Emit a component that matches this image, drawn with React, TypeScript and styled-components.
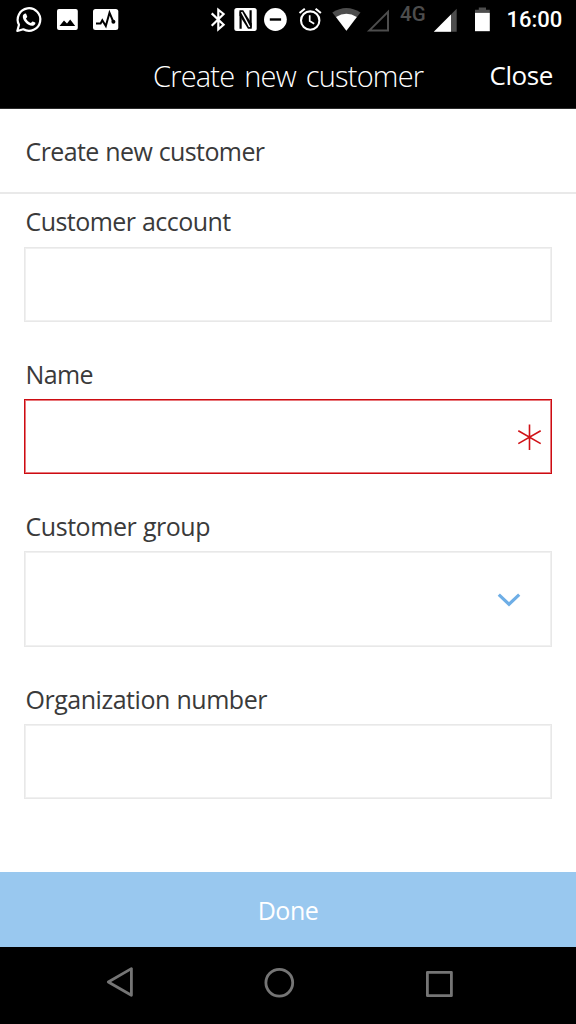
import React from "react";
import styled, { createGlobalStyle } from "styled-components";

const GlobalStyle = createGlobalStyle`
  * { box-sizing: border-box; }
  body { margin: 0; background: #fff; }
`;

const Screen = styled.div`
  display: flex;
  flex-direction: column;
  width: 576px;
  height: 1024px;
  overflow: hidden;
  background: #fff;
  color: #3a3a3a;
  font-family: "Open Sans", "Noto Sans", sans-serif;
`;

const StatusBar = styled.div`
  display: flex;
  align-items: flex-start;
  height: 40px;
  background: #000;
  color: #fff;
`;

const StatusIcon = styled.svg<{ $gap: number }>`
  flex: none;
  display: block;
  height: 40px;
  margin-left: ${(p) => p.$gap}px;
`;

const Network = styled.span`
  width: 28px;
  margin-left: 9px;
  color: #4d4d4d;
  font: 500 20.5px/28px Roboto, sans-serif;
`;

const Clock = styled.span`
  margin-left: 15.5px;
  font: 500 22px/40px Roboto, sans-serif;
  white-space: nowrap;
`;

const TitleBar = styled.header`
  display: grid;
  grid-template-columns: 153px 1fr auto;
  align-items: center;
  height: 69px;
  padding: 0 23px 0 0;
  background: #000;
  color: #fff;
  border-bottom: 1px solid #2b2b2b;
`;

const Title = styled.h1`
  grid-column: 2;
  margin: 0;
  padding-top: 3px;
  font-size: 29px;
  font-weight: 300;
  line-height: 64px;
  letter-spacing: -0.82px;
  word-spacing: 3.3px;
  white-space: nowrap;
`;

const CloseButton = styled.button`
  padding: 2px 0 0;
  border: 0;
  background: none;
  color: inherit;
  font: 400 26px/64px "Open Sans", "Noto Sans", sans-serif;
  letter-spacing: -0.4px;
`;

const SectionTitle = styled.h2`
  height: 85px;
  margin: 0;
  padding-left: 25.5px;
  border-bottom: 2px solid #e9e9e9;
  font-size: 25px;
  font-weight: 400;
  line-height: 85px;
  letter-spacing: -0.6px;
  word-spacing: 0.6px;
`;

const Form = styled.form`
  flex: 1;
  display: flex;
  flex-direction: column;
  padding: 8px 24px 0;
`;

const Field = styled.label`
  display: block;
  margin-bottom: 32px;
`;

const LabelText = styled.span<{ $spacing: number; $offset?: number }>`
  display: block;
  height: 45px;
  padding: ${(p) => p.$offset ?? 1}px 0 0 1.5px;
  font-size: 25px;
  line-height: 38px;
  letter-spacing: ${(p) => p.$spacing}px;
  word-spacing: 0.6px;
`;

const Control = styled.span<{ $tall?: boolean; $required?: boolean }>`
  display: flex;
  align-items: center;
  justify-content: flex-end;
  height: ${(p) => (p.$tall ? 96 : 75)}px;
  padding-right: ${(p) => (p.$required ? 9 : 30)}px;
  border: 1px solid ${(p) => (p.$required ? "#cc0c12" : "#e8e8e8")};
  box-shadow: inset 0 0 0 1px ${(p) => (p.$required ? "#e8787b" : "#f0f0f0")};
`;

const DoneButton = styled.button`
  height: 75px;
  padding: 0;
  border: 0;
  background: #99c8ef;
  color: #fff;
  font: 400 25px/77px "Open Sans", "Noto Sans", sans-serif;
  letter-spacing: -0.5px;
`;

const NavBar = styled.nav`
  display: flex;
  align-items: flex-start;
  justify-content: space-between;
  height: 77px;
  padding: 16px 120px 0 104px;
  background: #000;
`;

function StatusIcons() {
  return (
    <>
      <StatusIcon $gap={15} width="28" viewBox="15 0 28 40" aria-label="WhatsApp">
        <path d="M17.3 31 L19 24.8 A11.3 11.3 0 1 1 23.3 29.3 Z" fill="none" stroke="#fff" strokeWidth="2.2" strokeLinejoin="round" />
        <path d="M22.9 15.6 C23.7 14 25.1 13.1 26.1 13.8 L27.2 16.5 C27.4 17.4 26.3 18 26 18.5 C26.9 20.6 28.7 22 30.8 22.9 C31.4 22.7 32 21.2 32.8 21.4 L35.2 22.6 C35.9 23.3 34.8 25.4 33.1 25.7 C28.4 26.7 21.9 20.4 22.9 15.6Z" fill="#fff" />
      </StatusIcon>
      <StatusIcon $gap={14} width="21" viewBox="57 0 21 40" aria-label="Picture">
        <rect x="57" y="9" width="20.8" height="21" rx="2" fill="#fff" />
        <path d="M59.5 26 L64 20.5 L67 23.6 L70.2 19.4 L75.2 26Z" fill="#000" />
      </StatusIcon>
      <StatusIcon $gap={15} width="26" viewBox="93 0 26 40" aria-label="Activity">
        <rect x="93" y="9" width="25.3" height="21" rx="2.5" fill="#fff" />
        <path d="M96 23.4 H100.6 L102.3 20.3 L105.8 26 L109.5 12.7 L113.2 21.5" fill="none" stroke="#000" strokeWidth="2" />
        <circle cx="113.4" cy="21.7" r="2" fill="#000" />
      </StatusIcon>
      <StatusIcon $gap={91} width="17" viewBox="210 0 17 40" aria-label="Bluetooth">
        <path d="M211.7 13.4 L223.6 24.8 L218.3 29.3 V9.7 L223.6 14 L211.7 25.8" fill="none" stroke="#fff" strokeWidth="2.2" />
      </StatusIcon>
      <StatusIcon $gap={7} width="23" viewBox="234 0 23 40" aria-label="NFC">
        <rect x="234.3" y="8" width="22.4" height="23" rx="2.5" fill="#fff" />
        <path d="M240.6 28.8 V11.5 M250.6 10.2 V27.5" fill="none" stroke="#000" strokeWidth="2.2" />
        <path d="M239.5 10.2 H243.2 L251.7 23.5 V28.8 H248 L239.5 15.5Z" fill="#000" />
        <path d="M241.6 12 L249.6 27" stroke="#fff" strokeWidth="1.5" />
      </StatusIcon>
      <StatusIcon $gap={7} width="24" viewBox="264 0 24 40" aria-label="Do not disturb">
        <circle cx="275.4" cy="19.5" r="11.4" fill="#fff" />
        <rect x="269.8" y="18.3" width="11.3" height="2.4" fill="#000" />
      </StatusIcon>
      <StatusIcon $gap={10} width="26" viewBox="298 0 26 40" aria-label="Alarm">
        <circle cx="310.2" cy="20.6" r="9.2" fill="none" stroke="#fff" strokeWidth="2.1" />
        <path d="M299.5 13 L304.8 8.7 M315.6 8.7 L320.9 13" stroke="#fff" strokeWidth="2.1" />
        <path d="M309.7 15.2 V21.1 L314.2 23.7" fill="none" stroke="#fff" strokeWidth="1.7" />
      </StatusIcon>
      <StatusIcon $gap={7} width="31" viewBox="331 0 31 40" aria-label="Wi-Fi">
        <path d="M346.4 30.7 L332.3 12.6 Q346.4 3.5 360.5 12.6Z" fill="#4d4d4d" />
        <path d="M346.4 30.7 L336 17.1 Q346.4 10.4 356.8 17.1Z" fill="#fff" />
      </StatusIcon>
      <StatusIcon $gap={4} width="25" viewBox="366 0 25 40" aria-label="No signal">
        <path d="M369.2 30.6 L388 11.8 V30.6Z" fill="none" stroke="#4d4d4d" strokeWidth="2" />
      </StatusIcon>
      <Network>4G</Network>
      <StatusIcon $gap={5} width="25" viewBox="433 0 25 40" aria-label="Signal">
        <path d="M433.8 31.7 L456.7 8.8 V31.7Z" fill="#4d4d4d" />
        <path d="M433.8 31.7 L451 14.5 V31.7Z" fill="#fff" />
      </StatusIcon>
      <StatusIcon $gap={16} width="17" viewBox="474 0 17 40" aria-label="Battery">
        <path d="M475 12.8 V9.7 H478.8 V7.6 H486 V9.7 H489.8 V12.8Z" fill="#4d4d4d" />
        <rect x="475" y="12.8" width="14.8" height="18.4" fill="#fff" />
      </StatusIcon>
    </>
  );
}

export default function App() {
  return (
    <Screen>
      <GlobalStyle />
      <StatusBar>
        <StatusIcons />
        <Clock>16:00</Clock>
      </StatusBar>
      <TitleBar>
        <Title>Create new customer</Title>
        <CloseButton type="button">Close</CloseButton>
      </TitleBar>
      <SectionTitle>Create new customer</SectionTitle>
      <Form>
        <Field>
          <LabelText $spacing={-0.55} $offset={0}>Customer account</LabelText>
          <Control />
        </Field>
        <Field>
          <LabelText $spacing={-0.6}>Name</LabelText>
          <Control $required>
            <svg width="26" height="28" viewBox="0 0 26 28" fill="none" stroke="#d01217" strokeWidth="1.6">
              <path d="M13.5 1.5 V27 M2.3 7.8 L24.7 20.6 M24.7 7.8 L2.3 20.6" />
            </svg>
          </Control>
        </Field>
        <Field>
          <LabelText $spacing={-0.45}>Customer group</LabelText>
          <Control $tall>
            <svg width="24" height="20" viewBox="0 0 24 20" fill="none" stroke="#6eaee6" strokeWidth="3.2">
              <path d="M1.8 5.7 L12 15.3 L22.2 5.7" />
            </svg>
          </Control>
        </Field>
        <Field>
          <LabelText $spacing={-0.47}>Organization number</LabelText>
          <Control />
        </Field>
      </Form>
      <DoneButton type="button">Done</DoneButton>
      <NavBar>
        <svg width="32" height="40" viewBox="104 963 32 40" fill="none" stroke="#757575" strokeWidth="2.8" strokeLinejoin="round">
          <path d="M108.3 982 L131.4 968.6 V995.3Z" />
        </svg>
        <svg width="32" height="40" viewBox="264 963 32 40" fill="none" stroke="#757575" strokeWidth="2.8">
          <circle cx="279.3" cy="982.8" r="13.4" />
        </svg>
        <svg width="32" height="40" viewBox="424 963 32 40" fill="none" stroke="#757575" strokeWidth="2.8" strokeLinejoin="round">
          <rect x="427.4" y="972.3" width="24" height="23.4" />
        </svg>
      </NavBar>
    </Screen>
  );
}
